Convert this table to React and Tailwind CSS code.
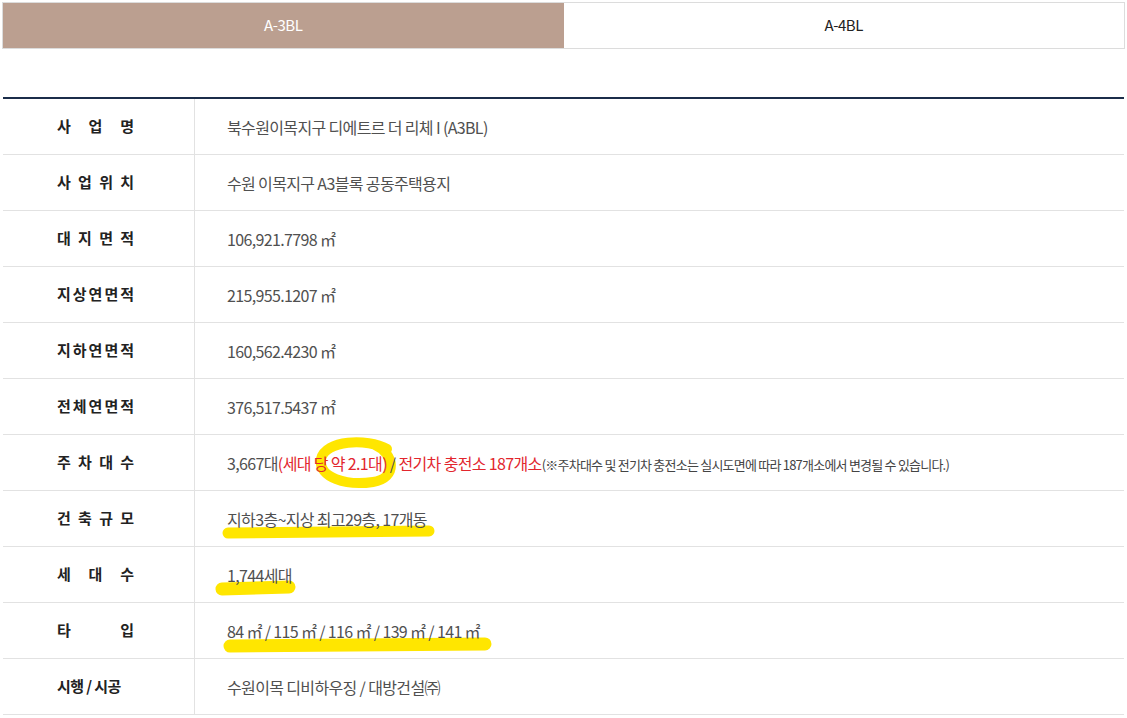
import React from "react";

const font = { fontFamily: '"Noto Sans CJK KR", "Noto Sans", sans-serif' };

function Label({ chars }) {
  return (
    <div className="ml-[54px] flex w-[77px] justify-between text-[15px] font-bold text-[#222]">
      {chars.map((c, i) => (
        <span key={i}>{c}</span>
      ))}
    </div>
  );
}

function Row({ label, children, mark }) {
  return (
    <div className="flex h-14 border-b border-[#e2e2e2]">
      <div className="flex w-[192px] shrink-0 items-center border-r border-[#e2e2e2]">
        {label}
      </div>
      <div className="relative flex flex-1 items-center pl-8 text-[16px] tracking-[-0.04em] text-[#505050]">
        {mark && (
          <svg className="pointer-events-none absolute left-0 top-0 h-full w-full overflow-visible">
            {mark}
          </svg>
        )}
        <span className="relative">{children}</span>
      </div>
    </div>
  );
}

const Y = "#ffe600";

export default function App() {
  return (
    <div className="min-h-[718px] bg-white px-[2px] pt-[2px]" style={font}>
      <div className="flex h-[47px] border border-[#dcdcdc]">
        <div className="flex flex-1 items-center justify-center bg-[#bb9f90] text-[15px] tracking-[-0.03em] text-white">
          A-3BL
        </div>
        <div className="flex flex-1 items-center justify-center bg-white text-[15px] tracking-[-0.03em] text-[#222]">
          A-4BL
        </div>
      </div>

      <div className="mx-[1px] mt-[48px] border-t-2 border-[#1b2d4a]">
        <Row label={<Label chars={["사", "업", "명"]} />}>북수원이목지구 디에트르 더 리체 I (A3BL)</Row>
        <Row label={<Label chars={["사", "업", "위", "치"]} />}>수원 이목지구 A3블록 공동주택용지</Row>
        <Row label={<Label chars={["대", "지", "면", "적"]} />}>106,921.7798 ㎡</Row>
        <Row label={<Label chars={["지", "상", "연", "면", "적"]} />}>215,955.1207 ㎡</Row>
        <Row label={<Label chars={["지", "하", "연", "면", "적"]} />}>160,562.4230 ㎡</Row>
        <Row label={<Label chars={["전", "체", "연", "면", "적"]} />}>376,517.5437 ㎡</Row>
        <Row
          label={<Label chars={["주", "차", "대", "수"]} />}
          mark={
            <path
              d="M 192 14 C 172 3, 130 5, 126 24 C 123 43, 152 51, 178 47 C 203 43, 200 19, 180 10"
              fill="none"
              stroke={Y}
              strokeWidth="10"
              strokeLinecap="round"
            />
          }
        >
          3,667대<span className="text-[#e2262e]">(세대 당 약 2.1대)</span> /{" "}
          <span className="text-[#e2262e]">전기차 충전소 187개소</span>
          <span className="text-[13px] tracking-[-0.06em] text-[#444]">(※주차대수 및 전기차 충전소는 실시도면에 따라 187개소에서 변경될 수 있습니다.)</span>
        </Row>
        <Row
          label={<Label chars={["건", "축", "규", "모"]} />}
          mark={<path d="M 33 42 L 234 40" fill="none" stroke={Y} strokeWidth="11" strokeLinecap="round" />}
        >
          지하3층~지상 최고29층, 17개동
        </Row>
        <Row
          label={<Label chars={["세", "대", "수"]} />}
          mark={<path d="M 27 42 L 94 40" fill="none" stroke={Y} strokeWidth="13" strokeLinecap="round" />}
        >
          1,744세대
        </Row>
        <Row
          label={<Label chars={["타", "입"]} />}
          mark={<path d="M 35 43 L 290 41" fill="none" stroke={Y} strokeWidth="13" strokeLinecap="round" />}
        >
          84 ㎡ / 115 ㎡ / 116 ㎡ / 139 ㎡ / 141 ㎡
        </Row>
        <Row label={<div className="ml-[54px] text-[15px] font-bold tracking-[-0.04em] text-[#222]">시행 / 시공</div>}>
          수원이목 디비하우징 / 대방건설㈜
        </Row>
      </div>
    </div>
  );
}
